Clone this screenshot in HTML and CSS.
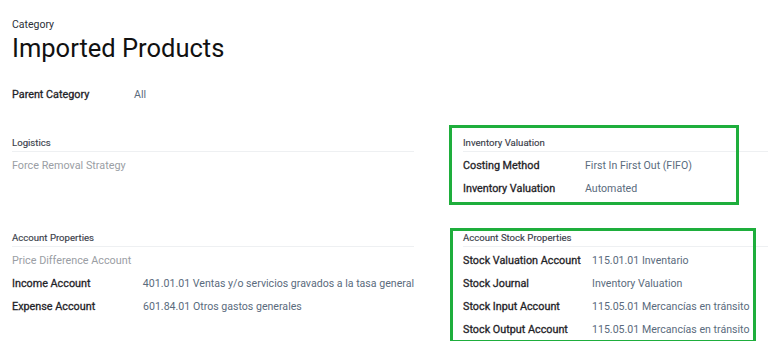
FILE: index.html
```html
<!DOCTYPE html>
<html lang="en">
<head>
  <meta charset="UTF-8">
  <meta name="viewport" content="width=device-width, initial-scale=1.0">
  <title>Imported Products</title>
  <link rel="stylesheet" href="styles.css">
</head>
<body>
  <div class="sheet">
    <!-- Title -->
    <div class="caption">Category</div>
    <h1 class="title">Imported Products</h1>

    <div class="row parent">
      <div class="label">Parent Category</div>
      <div class="value">All</div>
    </div>

    <!-- Groups -->
    <div class="groups">
      <div class="group">
        <div class="group-title">Logistics</div>
        <div class="row">
          <div class="label muted">Force Removal Strategy</div>
        </div>
      </div>

      <div class="group marked mark-valuation">
        <div class="group-title">Inventory Valuation</div>
        <div class="row">
          <div class="label w-valuation">Costing Method</div>
          <div class="value">First In First Out (FIFO)</div>
        </div>
        <div class="row">
          <div class="label w-valuation">Inventory Valuation</div>
          <div class="value">Automated</div>
        </div>
      </div>

      <div class="group">
        <div class="group-title">Account Properties</div>
        <div class="row">
          <div class="label muted">Price Difference Account</div>
        </div>
        <div class="row">
          <div class="label w-account">Income Account</div>
          <div class="value">401.01.01 Ventas y/o servicios gravados a la tasa general</div>
        </div>
        <div class="row">
          <div class="label w-account">Expense Account</div>
          <div class="value">601.84.01 Otros gastos generales</div>
        </div>
      </div>

      <div class="group marked mark-stock">
        <div class="group-title">Account Stock Properties</div>
        <div class="row">
          <div class="label w-stock">Stock Valuation Account</div>
          <div class="value">115.01.01 Inventario</div>
        </div>
        <div class="row">
          <div class="label w-stock">Stock Journal</div>
          <div class="value">Inventory Valuation</div>
        </div>
        <div class="row">
          <div class="label w-stock">Stock Input Account</div>
          <div class="value">115.05.01 Mercancías en tránsito</div>
        </div>
        <div class="row">
          <div class="label w-stock">Stock Output Account</div>
          <div class="value">115.05.01 Mercancías en tránsito</div>
        </div>
      </div>
    </div>
  </div>
</body>
</html>
```

FILE: styles.css
```css
body {
  margin: 0;
  font-family: Roboto, "Noto Sans", sans-serif;
  font-size: 10.8px;
  color: #1f2328;
  background: #fff;
  overflow: hidden;
}
.sheet {
  width: 900px;
  padding: 17px 12px 0 12px;
}
.caption {
  font-size: 10.5px;
  line-height: 16px;
  color: #2b2f36;
}
.title {
  margin: -1px 0 0 0;
  font-size: 25.5px;
  font-weight: 400;
  line-height: 32px;
  color: #111;
}
.row {
  display: flex;
  height: 23px;
  align-items: center;
}
.parent {
  margin-top: 19px;
}
.parent .label {
  width: 122px;
}
.label {
  font-weight: 400;
  -webkit-text-stroke: 0.3px #1f2328;
  color: #1f2328;
  white-space: nowrap;
}
.label.muted {
  -webkit-text-stroke: 0;
  color: #9a9ea4;
}
.value {
  font-size: 10.6px;
  color: #5a6b7d;
  white-space: nowrap;
}
.w-valuation {
  width: 122px;
}
.w-account {
  width: 131px;
}
.w-stock {
  width: 129px;
}
.groups {
  display: grid;
  grid-template-columns: 402px 402px;
  column-gap: 49px;
  row-gap: 30px;
  margin-top: 29px;
  align-items: start;
}
.group {
  position: relative;
}
.group-title {
  font-size: 9.6px;
  font-weight: 400;
  -webkit-text-stroke: 0.15px #3a404a;
  line-height: 15px;
  color: #3a404a;
  padding-bottom: 1px;
  border-bottom: 1px solid #eef0f2;
  margin-bottom: 2px;
}
.marked::after {
  content: "";
  position: absolute;
  border: 3px solid #1eae3c;
}
.mark-valuation::after {
  left: -14px;
  top: -10px;
  width: 284px;
  height: 74px;
}
.mark-stock::after {
  left: -13px;
  top: -2px;
  width: 300px;
  height: 109px;
}
```
